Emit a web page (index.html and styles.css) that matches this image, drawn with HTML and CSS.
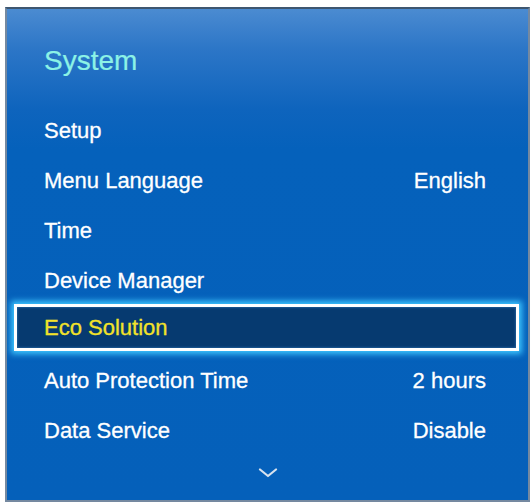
FILE: index.html
```html
<!DOCTYPE html>
<html>
<head>
<meta charset="utf-8">
<link rel="stylesheet" href="styles.css">
</head>
<body>
<div class="panel">
  <div class="header"><span class="title">System</span></div>
  <div class="list">
    <div class="row"><span>Setup</span></div>
    <div class="row"><span>Menu Language</span><span>English</span></div>
    <div class="row"><span>Time</span></div>
    <div class="row"><span>Device Manager</span></div>
    <div class="row selected"><span>Eco Solution</span></div>
    <div class="row"><span>Auto Protection Time</span><span>2 hours</span></div>
    <div class="row"><span>Data Service</span><span>Disable</span></div>
  </div>
  <div class="more">
    <svg class="chevron" width="20" height="10" viewBox="0 0 20 10"><path d="M2 1.5 L10 8 L18 1.5" fill="none" stroke="#d8e2ee" stroke-width="2.2" stroke-linecap="round" stroke-linejoin="round"/></svg>
  </div>
</div>
</body>
</html>
```

FILE: styles.css
```css
html, body {
  margin: 0;
  padding: 0;
  background: #ffffff;
}
body {
  font-family: "Liberation Sans", Arial, sans-serif;
}
.panel {
  margin: 7px 0 0 5px;
  width: 521px;
  height: 491px;
  border: 2px solid #7589a0;
  border-top-color: #3e5670;
  background: linear-gradient(to bottom, #4b8bd1 0px, #2c76c7 40px, #0e64bd 100px, #0561bb 140px, #0560ba 100%);
  display: flex;
  flex-direction: column;
}
.header {
  height: 97px;
  box-sizing: border-box;
  padding: 36px 0 0 37px;
}
.title {
  display: block;
  font-size: 28px;
  line-height: 32px;
  color: #8cf2e6;
  -webkit-text-stroke: 0.2px #8cf2e6;
}
.list {
  display: flex;
  flex-direction: column;
}
.row {
  height: 50px;
  display: flex;
  align-items: center;
  justify-content: space-between;
  padding: 0 42px 0 37px;
  font-size: 22px;
  color: #ffffff;
  -webkit-text-stroke: 0.3px currentColor;
}
.row.selected {
  height: 47px;
  box-sizing: border-box;
  margin: -2px 9px 5px 7px;
  padding: 0 0 0 27px;
  border: 3px solid #ffffff;
  background: #063a70;
  color: #f2e22a;
  box-shadow: 0 0 6px 3px #3ec6ff, inset 0 0 2px 1px #1d5a95;
}
.more {
  display: flex;
  justify-content: center;
  padding-top: 12px;
}
.chevron {
  display: block;
}
```
